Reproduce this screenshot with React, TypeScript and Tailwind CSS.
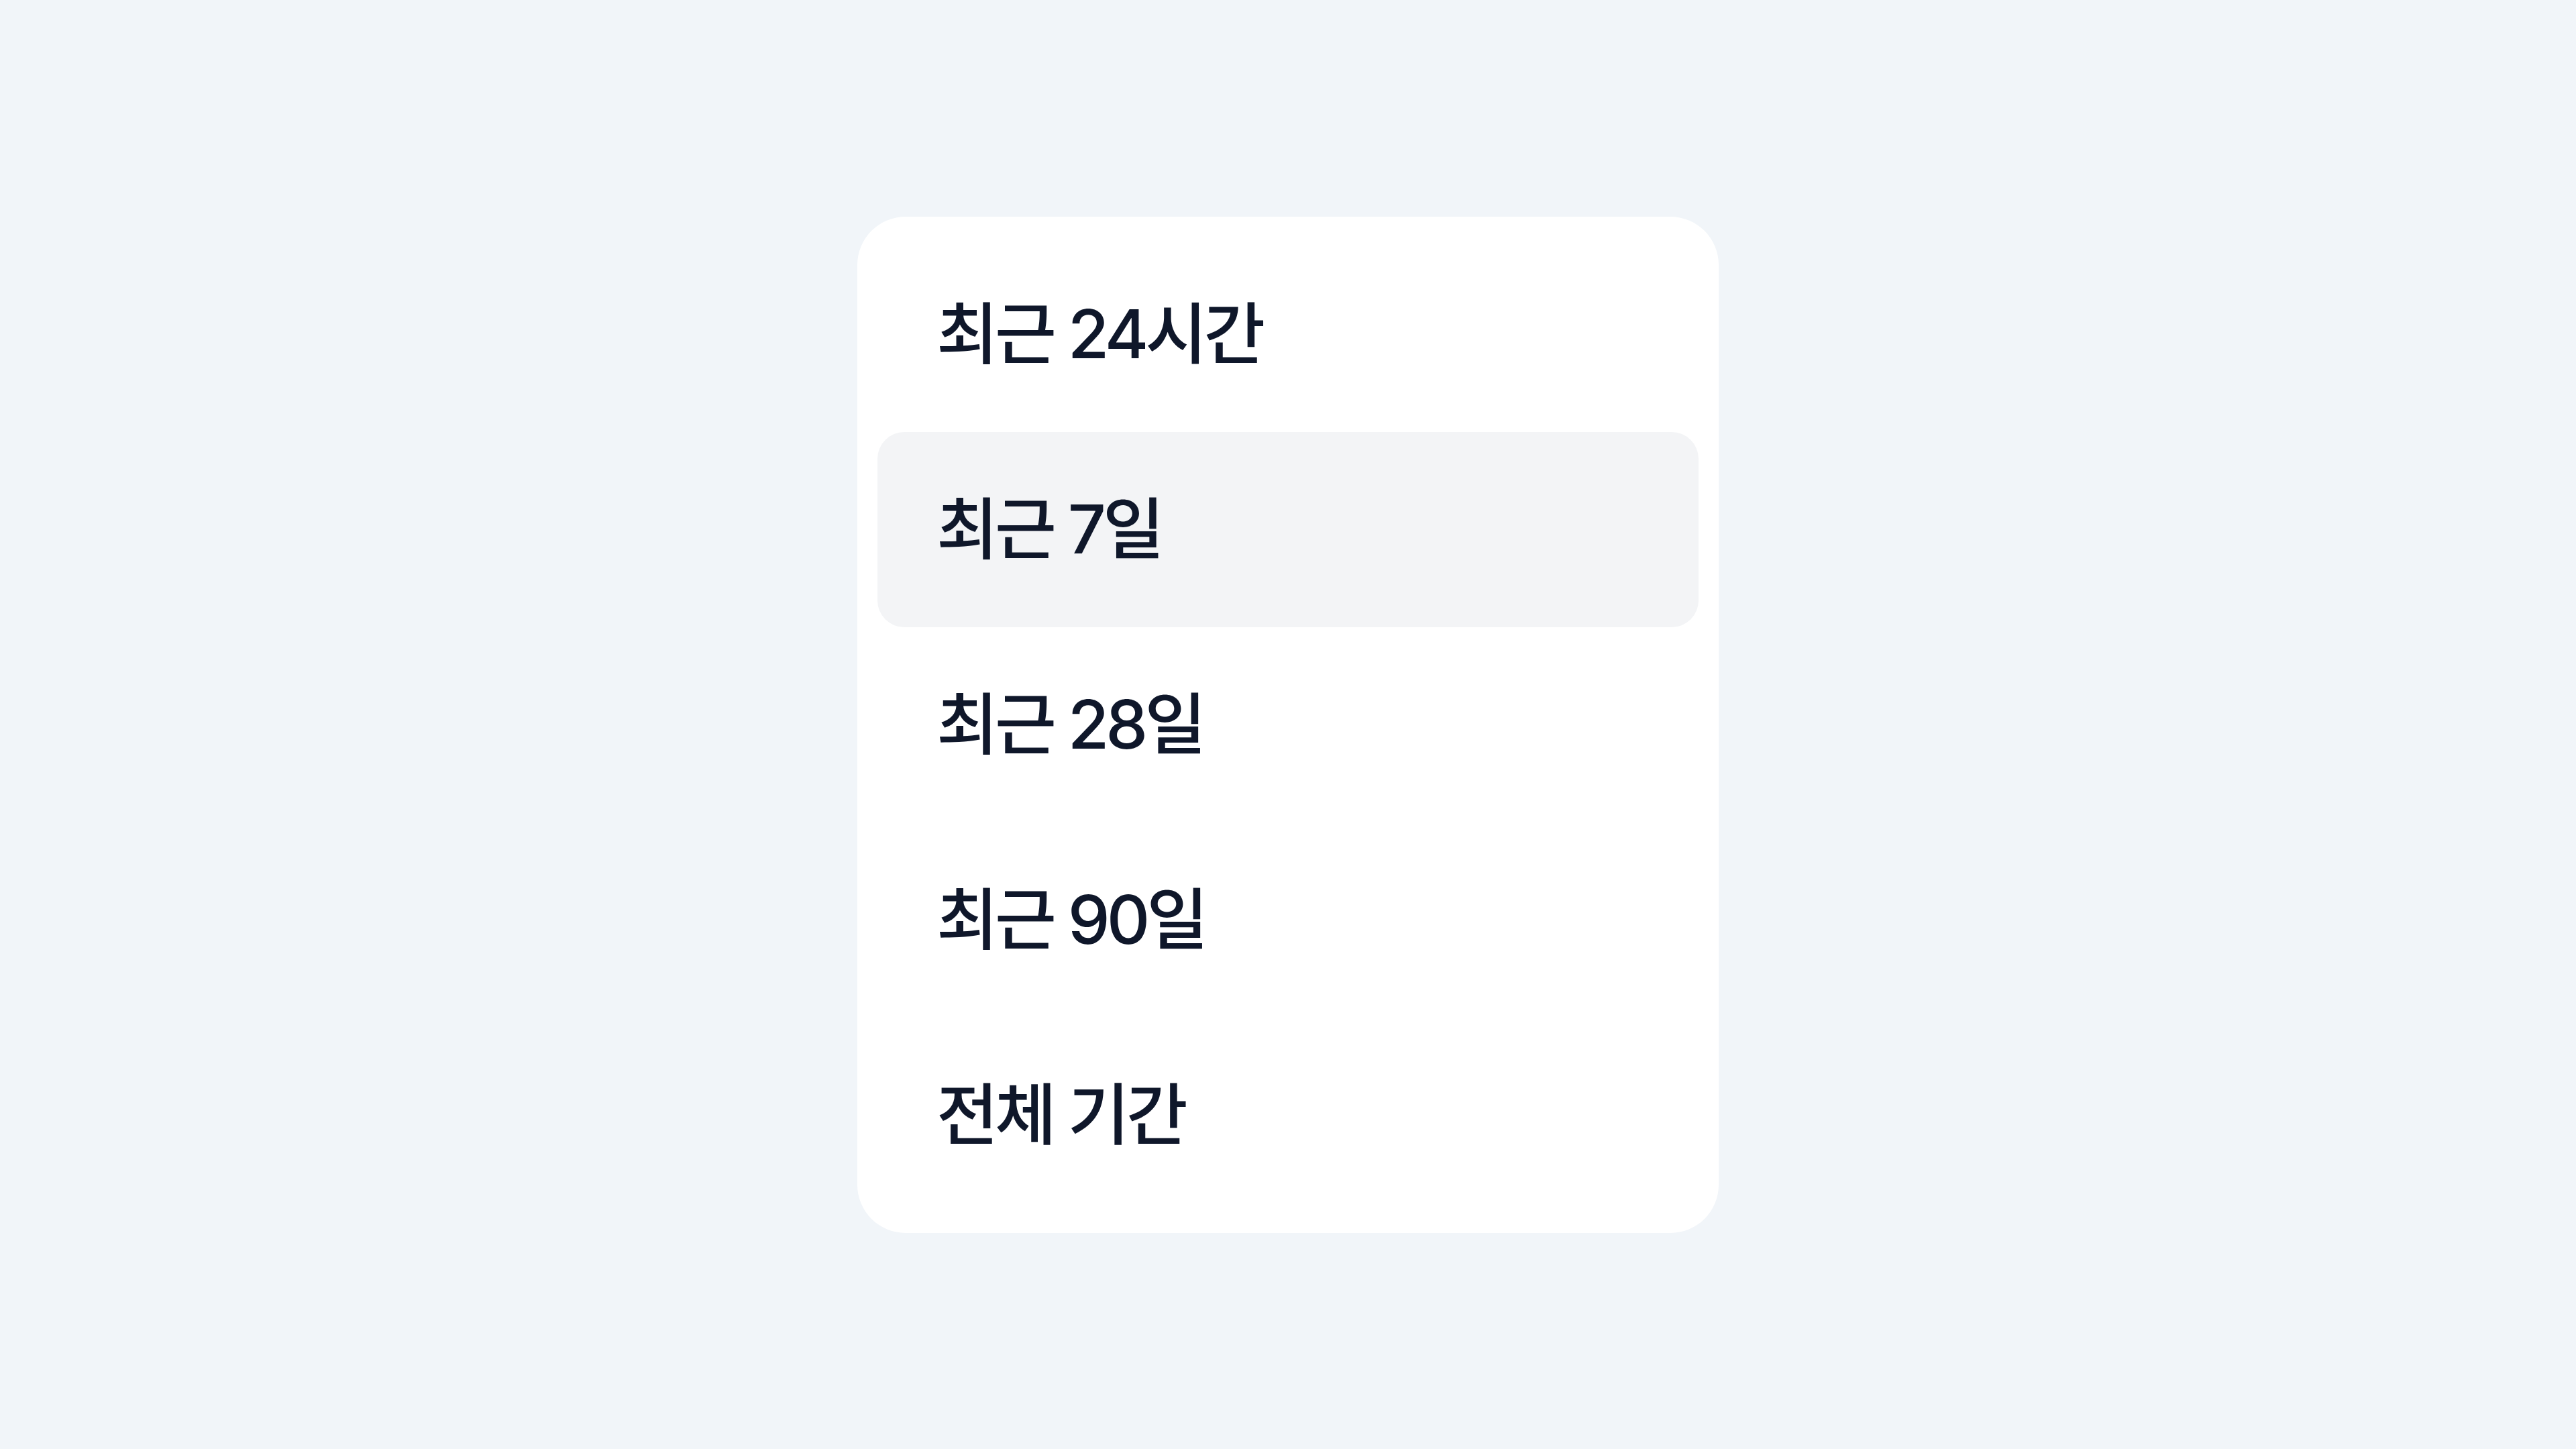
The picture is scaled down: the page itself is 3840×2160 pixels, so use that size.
import React from "react";

const items = ["최근 24시간", "최근 7일", "최근 28일", "최근 90일", "전체 기간"];

export default function App() {
  return (
    <div className="w-[3840px] h-[2160px] bg-[#f1f5f9] flex items-center justify-center">
      <div className="w-[1284px] bg-white rounded-[72px] p-[30px] flex flex-col">
        {items.map((t, i) => (
          <div
            key={t}
            className={
              i === 1
                ? "h-[291px] rounded-[40px] bg-[#f3f4f6] flex items-center pl-[88px]"
                : "h-[291px] rounded-[40px] flex items-center pl-[88px]"
            }
          >
            <span
              className="text-[100px] font-medium text-[#0f172a] leading-none tracking-tighter"
              style={{ fontFamily: "Inter, 'Noto Sans CJK KR', sans-serif" }}
            >
              {t}
            </span>
          </div>
        ))}
      </div>
    </div>
  );
}
